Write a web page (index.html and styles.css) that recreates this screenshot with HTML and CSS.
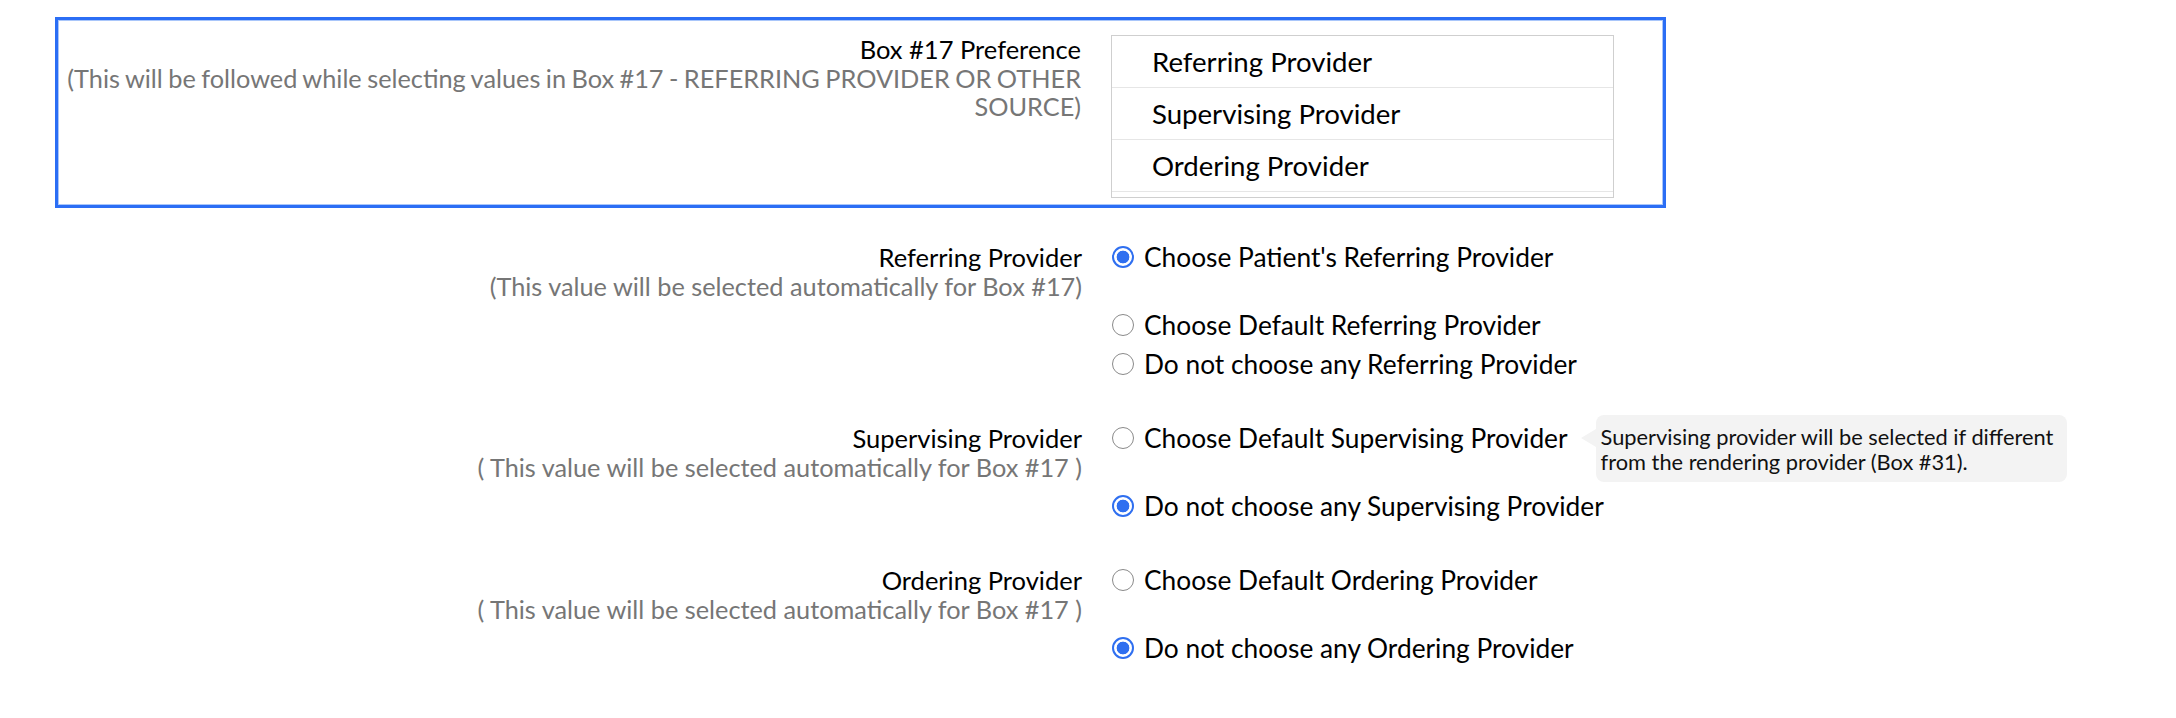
FILE: index.html
```html
<!DOCTYPE html>
<html lang="en">
<head>
<meta charset="utf-8">
<title>Box #17 Preference</title>
<link rel="stylesheet" href="styles.css">
</head>
<body>
<div class="form">
  <div class="row row-focused">
    <div class="label">
      <div class="label-title">Box #17 Preference</div>
      <div class="label-sub">(This will be followed while selecting values in Box #17 - REFERRING PROVIDER OR OTHER SOURCE)</div>
    </div>
    <div class="control">
      <ul class="listbox">
        <li class="list-item">Referring Provider</li>
        <li class="list-item">Supervising Provider</li>
        <li class="list-item">Ordering Provider</li>
        <li class="list-item"></li>
      </ul>
    </div>
  </div>

  <div class="row">
    <div class="label">
      <div class="label-title">Referring Provider</div>
      <div class="label-sub">(This value will be selected automatically for Box #17)</div>
    </div>
    <div class="control options">
      <label class="option"><span class="radio checked"></span><span>Choose Patient's Referring Provider</span></label>
      <label class="option"><span class="radio"></span><span>Choose Default Referring Provider</span></label>
      <label class="option"><span class="radio"></span><span>Do not choose any Referring Provider</span></label>
    </div>
  </div>

  <div class="row">
    <div class="label">
      <div class="label-title">Supervising Provider</div>
      <div class="label-sub">( This value will be selected automatically for Box #17 )</div>
    </div>
    <div class="control options">
      <label class="option"><span class="radio"></span><span>Choose Default Supervising Provider</span>
        <span class="tooltip">Supervising provider will be selected if different<br>from the rendering provider (Box #31).</span>
      </label>
      <label class="option"><span class="radio checked"></span><span>Do not choose any Supervising Provider</span></label>
    </div>
  </div>

  <div class="row">
    <div class="label">
      <div class="label-title">Ordering Provider</div>
      <div class="label-sub">( This value will be selected automatically for Box #17 )</div>
    </div>
    <div class="control options">
      <label class="option"><span class="radio"></span><span>Choose Default Ordering Provider</span></label>
      <label class="option"><span class="radio checked"></span><span>Do not choose any Ordering Provider</span></label>
    </div>
  </div>
</div>
</body>
</html>
```
FILE: styles.css
```css
* { box-sizing: border-box; }
html, body { margin: 0; padding: 0; background: #fff; }
body {
  font-family: Lato, "Open Sans", "Liberation Sans", sans-serif;
  color: #000;
  padding: 17px 0 0 55px;
}
.form { width: 1611px; display: flex; flex-direction: column; gap: 31px; }
.row {
  display: grid;
  grid-template-columns: 1023px 503px;
  column-gap: 30px;
  border: 4px solid transparent;
}
.row + .row + .row { margin-top: 7.5px; }
.row-focused {
  border: 3px solid #2b6ef5;
  box-shadow: inset 0 0 0 1px #a9c6fa;
  padding: 15px 0 7px;
}
.label { text-align: right; font-size: 25.5px; line-height: 28.5px; }
.label-title { color: #000; }
.label-sub { color: #767676; font-size: 25.3px; }
.row-focused .label-sub { word-spacing: -1px; }
.listbox {
  list-style: none;
  margin: 0; padding: 0;
  height: 163px;
  overflow: hidden;
  border: 1px solid #cfcfcf;
}
.list-item {
  height: 52px;
  padding-left: 40px;
  font-size: 27.6px;
  line-height: 52px;
  border-bottom: 1px solid #e6e6e6;
}
.options { display: flex; flex-direction: column; align-items: flex-start; gap: 11px; }
.option {
  position: relative;
  display: inline-flex;
  align-items: center;
  height: 28px;
  font-size: 26.3px;
  line-height: 28px;
  white-space: nowrap;
}
.option:first-child { margin-bottom: 28.5px; }
.radio {
  width: 22px; height: 22px;
  border-radius: 50%;
  border: 1.5px solid #8a8a8a;
  margin-right: 10px;
  flex: none;
  background: #fff;
}
.radio.checked {
  border: 2.5px solid #2f6ff0;
  background: radial-gradient(circle, #2f6ff0 0 6px, #fff 6.7px);
}
.tooltip {
  position: absolute;
  left: calc(100% + 28px);
  top: -9px;
  width: 471px;
  padding: 8.5px 8px 8.5px 5px;
  background: #f3f3f3;
  border-radius: 8px;
  font-size: 21.8px;
  line-height: 25px;
  color: #111;
  white-space: nowrap;
}
.tooltip::before {
  content: "";
  position: absolute;
  left: -15px;
  top: 14px;
  border-style: solid;
  border-width: 9px 15px 9px 0;
  border-color: transparent #f3f3f3 transparent transparent;
}
```
